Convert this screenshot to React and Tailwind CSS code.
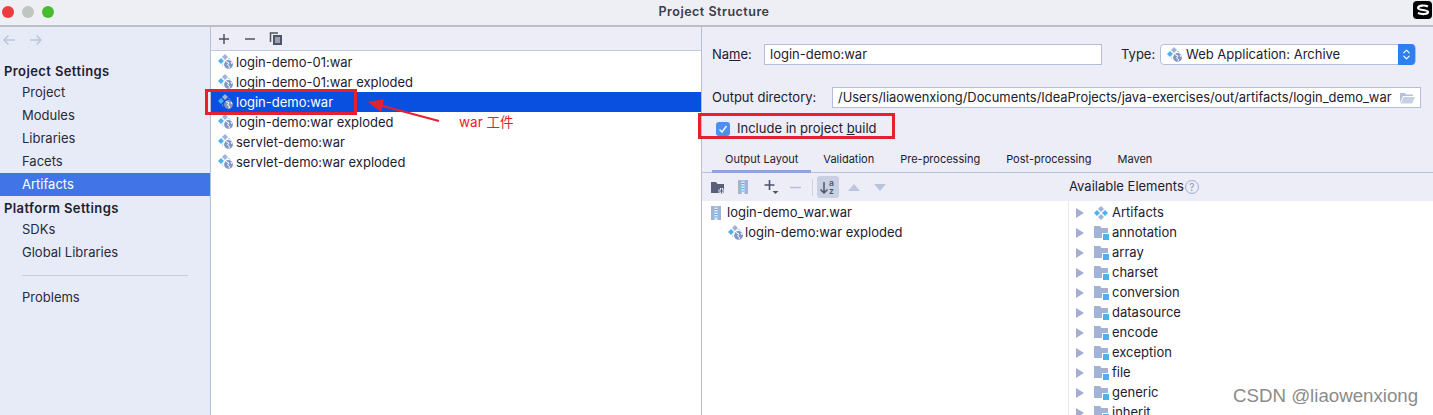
import { ChevronsUpDown } from "lucide-react";

const artifacts = [
  "login-demo-01:war",
  "login-demo-01:war exploded",
  "login-demo:war",
  "login-demo:war exploded",
  "servlet-demo:war",
  "servlet-demo:war exploded",
];

const modules = ["annotation", "array", "charset", "conversion", "datasource", "encode", "exception", "file", "generic", "inherit"];

function Diamonds({ r = 3 }) {
  const d = (cx, cy, fill) => (
    <path d={`M${cx} ${cy - r}L${cx + r} ${cy}L${cx} ${cy + r}L${cx - r} ${cy}Z`} fill={fill} />
  );
  return (
    <g>
      {d(7, 3, "#a3b1d3")}
      {d(3, 7, "#4cb1ee")}
      {d(11, 7, "#4cb1ee")}
      {d(7, 11, "#a3b1d3")}
    </g>
  );
}

function WarIcon({ selected }) {
  const ring = selected ? "#0a50e0" : "#fff";
  return (
    <svg width="16" height="16" viewBox="0 0 16 16" className="shrink-0">
      <Diamonds />
      <circle cx="10.500" cy="10.500" r="5.500" fill={ring} />
      <circle cx="10.500" cy="10.500" r="4.400" fill="#8296c4" />
      <path d="M8 7.500l3 1.500-1.500 2 2 1.500-.5 2M13 8l1 2" fill="none" stroke="#fff" strokeWidth="1" />
    </svg>
  );
}

function ArtifactsIcon() {
  return (
    <svg width="14" height="14" viewBox="0 0 14 14" className="shrink-0">
      <Diamonds />
    </svg>
  );
}

function ModuleFolder() {
  return (
    <svg width="16" height="14" viewBox="0 0 16 14" className="shrink-0">
      <path d="M0 0h6l1.500 2H14v10H0z" fill="#a3b3d6" />
      <rect x="8" y="7" width="8" height="7" fill="#fff" />
      <rect x="9" y="8" width="6" height="6" fill="#4cb1ee" />
    </svg>
  );
}

function ZipIcon() {
  return (
    <svg width="10" height="14" viewBox="0 0 10 14" className="shrink-0">
      <rect x="0" y="0" width="10" height="14" fill="#a3b3d6" />
      <rect x="3.500" y="0" width="3" height="14" fill="#e4ecf8" />
      <path d="M3.500 1h3M3.500 3.500h3M3.500 6h3M3.500 8.500h3M3.500 11h3" stroke="#4cb1ee" strokeWidth="1.200" />
    </svg>
  );
}

function Arrow() {
  return (
    <svg width="8" height="10" viewBox="0 0 8 10" className="shrink-0">
      <path d="M0 0l8 5-8 5z" fill="#a3aed0" />
    </svg>
  );
}

function MiniBtn({ children }) {
  return <span className="flex h-[22px] w-[22px] items-center justify-center">{children}</span>;
}

export default function App() {
  return (
    <div className="relative flex h-[415px] w-[1433px] flex-col overflow-hidden bg-[#ecedf6] font-['Inter','Liberation_Sans',sans-serif] text-[13px] text-[#1d2030]">
      {/* title bar */}
      <div className="relative flex h-[27px] shrink-0 items-center justify-center border-b-2 border-[#bcbfc6] bg-[#eeeef5] pr-[5px] pb-[1px] text-[12.500px] font-semibold tracking-[0.5px] text-[#3b3d47]">
        <div className="absolute left-[2px] top-[6px] flex gap-[8px]">
          <span className="h-3 w-3 rounded-full bg-[#ec3c3f]" />
          <span className="h-3 w-3 rounded-full bg-[#bfc6c2]" />
          <span className="h-3 w-3 rounded-full bg-[#48bb2f]" />
        </div>
        Project Structure
        <div className="absolute right-[1px] top-[1px] flex h-[18px] w-[19px] items-center justify-center rounded-[4px] bg-black">
          <svg width="14" height="12" viewBox="0 0 14 12">
            <path d="M12 2.500C9 1 2.500 1 2 4c-.3 2.500 10 1.500 10 4 0 2.500-6.500 2.500-10 1" fill="none" stroke="#fff" strokeWidth="2.200" />
          </svg>
        </div>
      </div>

      <div className="flex min-h-0 flex-1">
        {/* sidebar */}
        <aside className="w-[211px] shrink-0 border-r border-[#b8c0d8] bg-[#e7ebf7]">
          <div className="flex h-[24px] items-center gap-[13px] pl-[2px] pt-[1px]">
            <svg width="14" height="12" viewBox="0 0 14 12"><path d="M13 6H2M6.500 1.500L2 6l4.500 4.500" fill="none" stroke="#bcc5de" strokeWidth="1.500" /></svg>
            <svg width="14" height="12" viewBox="0 0 14 12"><path d="M1 6h11M7.500 1.500L12 6l-4.500 4.500" fill="none" stroke="#bcc5de" strokeWidth="1.500" /></svg>
          </div>
          <div className="pl-1 pt-[10px] font-semibold leading-[20px] tracking-[0.4px]">Project Settings</div>
          {["Project", "Modules", "Libraries", "Facets"].map((item) => (
            <div key={item} className="h-[23px] pl-[22px] leading-[23px] text-[#272a3a]">{item}</div>
          ))}
          <div className="h-[23px] bg-[#4174e6] pl-[22px] leading-[23px] text-white">Artifacts</div>
          <div className="h-[22px] pl-1 pt-px font-semibold leading-[22px] tracking-[0.4px]">Platform Settings</div>
          {["SDKs", "Global Libraries"].map((item) => (
            <div key={item} className="h-[23px] pl-[22px] leading-[23px] text-[#272a3a]">{item}</div>
          ))}
          <div className="mx-[22px] mb-[10px] mt-[11px] h-px bg-[#c6cbdc]" />
          <div className="h-[23px] pl-[22px] leading-[23px] text-[#272a3a]">Problems</div>
        </aside>

        {/* artifacts list */}
        <section className="w-[491px] shrink-0 border-r border-[#b8c0d8] bg-white">
          <div className="flex h-[24px] items-center gap-[4px] border-b border-[#c3cae0] bg-[#ecedf6] pl-[2px]">
            <MiniBtn><svg width="12" height="12" viewBox="0 0 12 12"><path d="M6 1v10M1 6h10" stroke="#4d5468" strokeWidth="1.500" /></svg></MiniBtn>
            <MiniBtn><svg width="12" height="12" viewBox="0 0 12 12"><path d="M1 6h10" stroke="#4d5468" strokeWidth="1.500" /></svg></MiniBtn>
            <MiniBtn>
              <svg width="14" height="14" viewBox="0 0 14 14"><path d="M1.500 10V1H9" fill="none" stroke="#4d5468" strokeWidth="1.500" /><path d="M4 3h9v10H4z" fill="#4d5468" /><path d="M6 6h5M6 8h5M6 10h5" stroke="#ecedf6" /></svg>
            </MiniBtn>
          </div>
          <div className="pt-px">
            {artifacts.map((name) => {
              const selected = name === "login-demo:war";
              return (
                <div key={name} className={`flex h-5 items-center gap-[2px] pl-[7px] ${selected ? "bg-[#0a50e0] text-white" : ""}`}>
                  <WarIcon selected={selected} />
                  <span className="pt-[2px]">{name}</span>
                </div>
              );
            })}
          </div>
        </section>

        {/* artifact detail */}
        <section className="flex min-w-0 flex-1 flex-col">
          <div className="mt-[17px] flex h-[21px] items-center pl-[10px] pr-[17px]">
            <span className="w-[52px]">Na<span className="underline">m</span>e:</span>
            <div className="flex h-[21px] w-[338px] items-center border border-[#b4bedb] bg-white pl-[5px]">login-demo:war</div>
            <span className="ml-[19px] w-[39px]">Type:</span>
            <div className="flex h-[21px] flex-1 items-center gap-[3px] rounded-[4px] border border-[#b4bedb] bg-white pl-[6px]">
              <WarIcon />
              Web Application: Archive
              <span className="ml-auto flex h-[21px] w-[17px] items-center justify-center rounded-r-[4px] bg-[#2f7ff0]">
                <ChevronsUpDown size={13} color="#fff" />
              </span>
            </div>
          </div>
          <div className="mt-[22px] flex h-[21px] items-center pl-[10px] pr-[12px]">
            <span className="w-[120px]">Output directory:</span>
            <div className="flex h-[21px] flex-1 items-center justify-between border border-[#b4bedb] bg-white pl-[5px] pr-[5px] text-[12.900px]">
              /Users/liaowenxiong/Documents/IdeaProjects/java-exercises/out/artifacts/login_demo_war
              <svg width="15" height="12" viewBox="0 0 15 12"><path d="M0 1h5l1 1.500h7V4H3L0 11z" fill="#b4c1dc" /><path d="M3.500 5H15l-3 6.500H.8z" fill="#c6d1e6" /></svg>
            </div>
          </div>
          <div className="mt-[11px] flex h-[20px] items-center gap-[7px] pl-[14px]">
            <span className="flex h-[14px] w-[14px] items-center justify-center rounded-[3px] bg-[#4a90ee]">
              <svg width="10" height="10" viewBox="0 0 10 10"><path d="M1.500 5.500L4 8l4.500-6" fill="none" stroke="#fff" strokeWidth="1.300" /></svg>
            </span>
            <span>Include in project <span className="underline">b</span>uild</span>
          </div>
          <div className="mt-[11px] flex h-[23px] items-start gap-[26px] border-b border-[#b9c2dd] pl-[23px] pt-px text-[11px] leading-[16px]">
            <span className="relative mr-[-1px] h-[22px]">
              Output Layout
              <span className="absolute -left-[13px] -right-[13px] top-[19px] h-[3px] bg-[#8ea5d6]" />
            </span>
            <span>Validation</span>
            <span>Pre-processing</span>
            <span>Post-processing</span>
            <span>Maven</span>
          </div>
          <div className="flex h-[28px] shrink-0">
            <div className="flex w-[367px] items-center pl-[9px]">
              <svg width="15" height="13" viewBox="0 0 15 13"><path d="M0 1h5l1.500 2H13v9H0z" fill="#596079" /><path d="M10.500 7v6M7.500 10h6" stroke="#ecedf6" strokeWidth="3" /><path d="M10.500 7.500v5M8 10h5" stroke="#596079" strokeWidth="1.200" /></svg>
              <span className="ml-[12px] flex"><ZipIcon /></span>
              <svg className="ml-[16px]" width="15" height="16" viewBox="0 0 15 16"><path d="M5.500 1v10M.5 6h10" stroke="#4d5468" strokeWidth="1.600" /><path d="M8.500 12h6l-3 3z" fill="#4d5468" /></svg>
              <svg className="ml-[11px]" width="11" height="3" viewBox="0 0 11 3"><path d="M0 1.500h11" stroke="#b4c0da" strokeWidth="1.500" /></svg>
              <span className="ml-[11px] h-[17px] w-px bg-[#ccd2e4]" />
              <span className="ml-[4px] flex h-[22px] w-[22px] items-center justify-center rounded-[3px] bg-[#c9d0e4]">
                <svg width="18" height="18" viewBox="0 0 18 18">
                  <path d="M5 4v11M1.500 11.500L5 15l3.500-3.500" fill="none" stroke="#4d5468" strokeWidth="1.500" />
                  <text x="10" y="8" fontSize="8.500" fontWeight="600" fill="#4d5468" fontFamily="Inter">a</text>
                  <text x="10" y="16" fontSize="8.500" fontWeight="600" fill="#4d5468" fontFamily="Inter">z</text>
                </svg>
              </span>
              <svg className="ml-[9px]" width="12" height="7" viewBox="0 0 12 7"><path d="M6 0l6 7H0z" fill="#bcc5de" /></svg>
              <svg className="ml-[14px]" width="12" height="7" viewBox="0 0 12 7"><path d="M0 0h12L6 7z" fill="#bcc5de" /></svg>
            </div>
            <div className="flex items-center gap-[1px]">
              Available Elements
              <span className="flex h-[14px] w-[14px] items-center justify-center rounded-full border border-[#9fb0d4] text-[10px] leading-none text-[#8397c4]">?</span>
            </div>
          </div>
          <div className="flex min-h-0 flex-1 bg-white">
            <div className="w-[367px] shrink-0 border-r border-[#e6e8f0] pl-[9px] pt-[2px]">
              <div className="flex h-5 items-center gap-[6px]"><ZipIcon />login-demo_war.war</div>
              <div className="flex h-5 items-center gap-px pl-[17px]"><WarIcon />login-demo:war exploded</div>
            </div>
            <div className="min-w-0 flex-1 pl-[7px] pt-[2px]">
              <div className="flex h-5 items-center">
                <Arrow />
                <span className="ml-[10px] mr-[4px] flex"><ArtifactsIcon /></span>
                Artifacts
              </div>
              {modules.map((name) => (
                <div key={name} className="flex h-5 items-center">
                  <Arrow />
                  <span className="ml-[10px] mr-[2px] flex"><ModuleFolder /></span>
                  {name}
                </div>
              ))}
            </div>
          </div>
        </section>
      </div>

      {/* annotations drawn over the screenshot */}
      <div className="absolute left-[205px] top-[89px] h-[26px] w-[152px] border-[3px] border-[#e7202e]" />
      <div className="absolute left-[698px] top-[113px] h-[26px] w-[197px] border-[3px] border-[#e7202e]" />
      <svg className="absolute left-[365px] top-[96px]" width="76" height="30" viewBox="0 0 76 30">
        <path d="M74 25L14 9" stroke="#e7202e" strokeWidth="2" />
        <path d="M3 6l16-3-3 13z" fill="#e7202e" />
      </svg>
      <div className="absolute left-[459px] top-[112px] font-['Inter','Noto_Sans_CJK_SC',sans-serif] text-[13.500px] text-[#e7202e]">war 工件</div>
      <div className="absolute left-[1233px] top-[385px] font-['Liberation_Sans',sans-serif] text-[18.700px] leading-[22px] text-[#8b8b8b]">CSDN @liaowenxiong</div>
    </div>
  );
}
